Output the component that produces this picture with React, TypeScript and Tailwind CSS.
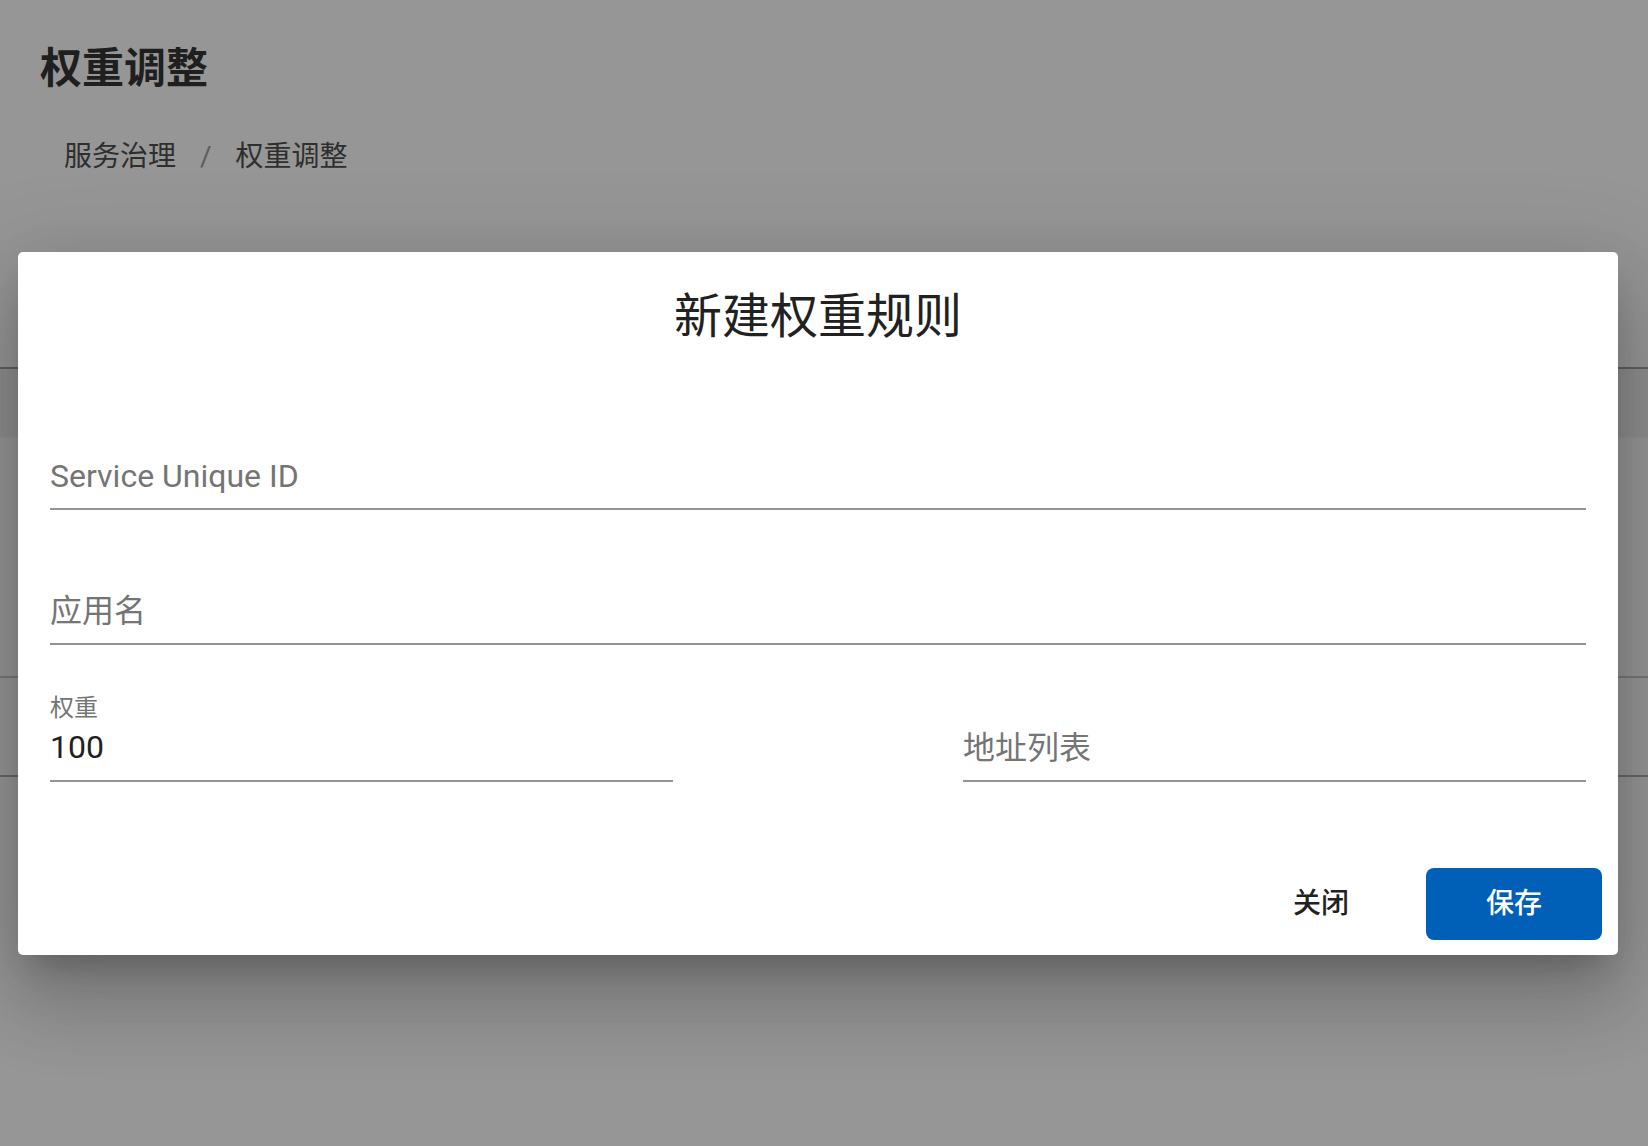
import { useState } from "react";

type FieldProps = {
  label: string;
  value?: string;
};

// standard underline text field, label floats when there is a value
function Field({ label, value }: FieldProps) {
  if (value) {
    return (
      <div className="flex flex-col h-[96px] border-b-2 border-[#949494] pt-[6px]">
        <div className="text-[24px] leading-[32px] text-[#757575]">{label}</div>
        <div className="mt-[4px] text-[32px] leading-[38px] text-[#212121]">{value}</div>
      </div>
    );
  }
  return (
    <div className="flex flex-col h-[96px] border-b-2 border-[#949494] pt-[43px]">
      <div className="text-[32px] leading-[38px] text-[#757575]">{label}</div>
    </div>
  );
}

export default function App() {
  const [weight] = useState("100");

  return (
    <div className="relative min-h-[1146px] overflow-hidden bg-[#969696] font-['Roboto','Noto_Sans_CJK_SC',sans-serif]">
      {/* page behind the modal */}
      <div className="px-[40px] pt-[41px]">
        <h1 className="text-[42px] leading-[56px] font-bold text-[#1f1f1f]">权重调整</h1>
        <div className="mt-[40px] ml-[24px] flex items-center text-[28px] leading-[40px] text-[#2e2e2e]">
          <span>服务治理</span>
          <span className="mx-[24px] text-[#5c5c5c]">/</span>
          <span>权重调整</span>
        </div>
        <div className="mt-[190px] -mx-[40px] border-t-2 border-[#606060]">
          <div className="h-[68px] bg-[#8e8e8e]"></div>
          <div className="h-[241px] border-t border-[#919191] border-b-2 border-b-[#777777]"></div>
          <div className="h-[99px] border-b-2 border-[#686868]"></div>
        </div>
      </div>

      {/* modal */}
      <div className="absolute inset-0 pl-[18px] pt-[252px]">
        <div className="flex flex-col w-[1600px] h-[703px] rounded-[5px] bg-white shadow-[0_22px_30px_-14px_rgba(0,0,0,0.2),0_48px_76px_6px_rgba(0,0,0,0.14),0_18px_92px_16px_rgba(0,0,0,0.12)]">
          <div className="pt-[27px] text-center text-[48px] leading-[76px] text-[#212121]">新建权重规则</div>

          <div className="px-[32px] mt-[59px]">
            <Field label="Service Unique ID" />
          </div>
          <div className="px-[32px] mt-[39px]">
            <Field label="应用名" />
          </div>
          <div className="px-[32px] mt-[41px] grid grid-cols-2 gap-[290px]">
            <Field label="权重" value={weight} />
            <Field label="地址列表" />
          </div>

          <div className="mt-[86px] pr-[16px] flex justify-end gap-[41px]">
            <button className="w-[128px] h-[72px] rounded-[8px] text-[28px] font-medium text-[#212121]">关闭</button>
            <button className="w-[176px] h-[72px] rounded-[8px] bg-[#0060b7] text-[28px] font-medium text-white">保存</button>
          </div>
        </div>
      </div>
    </div>
  );
}
